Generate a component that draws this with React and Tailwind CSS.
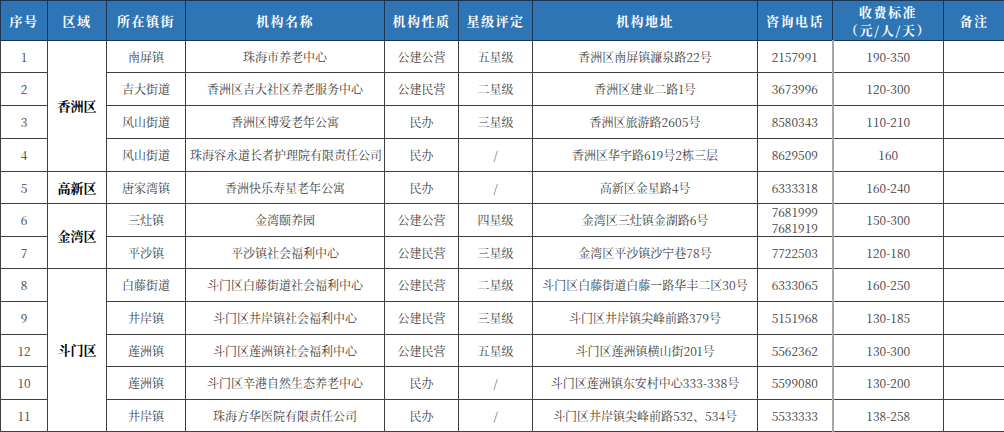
import React from 'react';

const COLS = [47, 59, 79, 199, 74, 74, 225, 75, 111, 61];

const HEADERS = ['序号', '区域', '所在镇街', '机构名称', '机构性质', '星级评定', '机构地址', '咨询电话', '收费标准', '备注'];

const ROWS = [
  { no: '1', town: '南屏镇', name: '珠海市养老中心', kind: '公建公营', star: '五星级', addr: '香洲区南屏镇濂泉路22号', tel: ['2157991'], fee: '190-350' },
  { no: '2', town: '吉大街道', name: '香洲区吉大社区养老服务中心', kind: '公建民营', star: '二星级', addr: '香洲区建业二路1号', tel: ['3673996'], fee: '120-300' },
  { no: '3', town: '风山街道', name: '香洲区博爱老年公寓', kind: '民办', star: '三星级', addr: '香洲区旅游路2605号', tel: ['8580343'], fee: '110-210' },
  { no: '4', town: '风山街道', name: '珠海容永道长者护理院有限责任公司', kind: '民办', star: '/', addr: '香洲区华宇路619号2栋三层', tel: ['8629509'], fee: '160' },
  { no: '5', town: '唐家湾镇', name: '香洲快乐寿星老年公寓', kind: '民办', star: '/', addr: '高新区金星路4号', tel: ['6333318'], fee: '160-240' },
  { no: '6', town: '三灶镇', name: '金湾颐养园', kind: '公建公营', star: '四星级', addr: '金湾区三灶镇金湖路6号', tel: ['7681999', '7681919'], fee: '150-300' },
  { no: '7', town: '平沙镇', name: '平沙镇社会福利中心', kind: '公建民营', star: '三星级', addr: '金湾区平沙镇沙宁巷78号', tel: ['7722503'], fee: '120-180' },
  { no: '8', town: '白藤街道', name: '斗门区白藤街道社会福利中心', kind: '公建民营', star: '二星级', addr: '斗门区白藤街道白藤一路华丰二区30号', tel: ['6333065'], fee: '160-250' },
  { no: '9', town: '井岸镇', name: '斗门区井岸镇社会福利中心', kind: '公建民营', star: '三星级', addr: '斗门区井岸镇尖峰前路379号', tel: ['5151968'], fee: '130-185' },
  { no: '12', town: '莲洲镇', name: '斗门区莲洲镇社会福利中心', kind: '公建民营', star: '五星级', addr: '斗门区莲洲镇横山街201号', tel: ['5562362'], fee: '130-300' },
  { no: '10', town: '莲洲镇', name: '斗门区辛港自然生态养老中心', kind: '民办', star: '/', addr: '斗门区莲洲镇东安村中心333-338号', tel: ['5599080'], fee: '130-200' },
  { no: '11', town: '井岸镇', name: '珠海方华医院有限责任公司', kind: '民办', star: '/', addr: '斗门区井岸镇尖峰前路532、534号', tel: ['5533333'], fee: '138-258' },
];

// region cells span rows: index -> [label, span]
const REGIONS = { 0: ['香洲区', 4], 4: ['高新区', 1], 5: ['金湾区', 2], 7: ['斗门区', 5] };

const ROW_H = [32, 33, 33, 33, 32, 33, 32, 33, 33, 32, 33, 32];

const font = 'font-["Noto_Serif_CJK_SC","Noto_Sans_CJK_SC","DejaVu_Serif",serif]';
const cell = 'border border-[#3f3f3f] text-center align-middle text-[12px] text-[#404040] px-1 whitespace-nowrap leading-[16px]';

export default function App() {
  return (
    <div className={`w-[1004px] h-[432px] bg-white overflow-hidden ${font}`}>
      <table className="table-fixed border-collapse w-[1004px]">
        <colgroup>
          {COLS.map((w, i) => (
            <col key={i} style={{ width: w }} />
          ))}
        </colgroup>
        <thead>
          <tr className="h-[40px] bg-[#2e75b6]">
            {HEADERS.map((h, i) => (
              <th
                key={i}
                className="border border-[#1e3550] text-white font-bold text-[13px] tracking-[1.5px] leading-[18px] text-center align-middle"
              >
                {i === 8 ? (
                  <>
                    收费标准
                    <br />
                    （元/人/天）
                  </>
                ) : (
                  h
                )}
              </th>
            ))}
          </tr>
        </thead>
        <tbody>
          {ROWS.map((r, i) => (
            <tr key={i} style={{ height: ROW_H[i] }}>
              <td className={cell}>{r.no}</td>
              {REGIONS[i] && (
                <td rowSpan={REGIONS[i][1]} className={`${cell} !text-black font-bold !text-[13px]`}>
                  {REGIONS[i][0]}
                </td>
              )}
              <td className={`${cell} border-l-[#8a8a8a]`}>{r.town}</td>
              <td className={cell}>{r.name}</td>
              <td className={cell}>{r.kind}</td>
              <td className={cell}>{r.star}</td>
              <td className={cell}>{r.addr}</td>
              <td className={`${cell} border-r-2 border-r-[#a6a6a6]`}>
                {r.tel.map((t) => (
                  <div key={t}>{t}</div>
                ))}
              </td>
              <td className={cell}>{r.fee}</td>
              <td className={cell}></td>
            </tr>
          ))}
        </tbody>
      </table>
    </div>
  );
}
